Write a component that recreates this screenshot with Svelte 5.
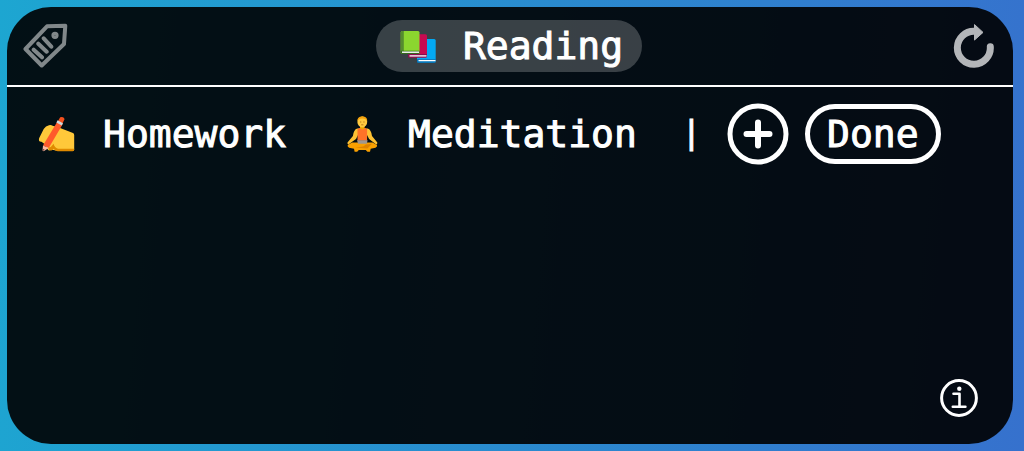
<script>
	let current = $state('Reading');
	let others = $state(['Homework', 'Meditation']);

	function pick(name) {
		others = others.map((o) => (o === name ? current : o));
		current = name;
	}
</script>

{#snippet emoji(name)}
	<svg class="emoji" viewBox="0 0 38 38" aria-hidden="true">
		{#if name === 'Reading'}
			<rect x="19" y="12" width="18.7" height="23.6" rx="1.5" fill="#03a9f4" />
			<path d="M19 32h18.7v2.4q0 1.4-1.4 1.4H20.4q-1.4 0-1.4-1.4z" fill="#0277bd" />
			<path d="M20.5 33.6h17" stroke="#fff" stroke-width="1.3" />
			<rect x="10" y="7.3" width="19" height="23.2" rx="1.5" fill="#c70a50" />
			<path d="M10 27h19v2.2q0 1.4-1.4 1.4H11.4q-1.4 0-1.4-1.4z" fill="#880e4f" />
			<path d="M11.5 28.9h17" stroke="#fff" stroke-width="1.3" />
			<rect x="2.7" y="4" width="18.8" height="23" rx="1.5" fill="#8bd62f" />
			<path d="M4.2 4h1.6v20.5H2.7v-19q0-1.5 1.5-1.5z" fill="#558b2f" />
			<path d="M2.7 23.8h18.8v1.6q0 1.5-1.5 1.5H4.2q-1.5 0-1.5-1.5z" fill="#33691e" />
			<path d="M4 25.2h17" stroke="#fff" stroke-width="1.4" />
		{:else if name === 'Homework'}
			<path
				d="M11 10.3q1.8-.6 3.6.4l6.2 1.7L35 18q1.2.6 1.2 2v14.5q0 1.5-1.5 1.5H20.5L13 34.5q-2 1.8-3.2 0L6.5 29l-3-2.2q-3.3.2-2.4-3.5L5.7 14q2-3.2 5.3-3.7z"
				fill="#ffc83a"
			/>
			<path
				d="M10 32.5q2.8.4 4.5-2.5l1-1.2q1 3.8 4.5 5h16.2v1q0 1.4-1.5 1.4h-15q-2.7-.3-4-2.4l-2.2 1.6q-2.5 1-3.5-2.9z"
				fill="#e08a00"
			/>
			<path d="M19.4 6.6l5.1 2.8L10.7 33l-5.7-2.6z" fill="#ff5a2b" />
			<path d="M19.8 6.6l2.4-4.3q3.2-1.2 4.4 1.6l-2.2 4.8z" fill="#f4511e" />
			<path d="M19.6 5.3l5.4 2.9-1.2 2.3-5.4-2.9z" fill="#cfd8dc" />
			<path d="M5 30.4l5.7 2.6-5 3.2-1.2-.7z" fill="#ffb8a0" />
			<path d="M4.9 33.8l1.9 1.3-2.3 1z" fill="#5d3a35" />
		{:else}
			<path
				d="M9 27.5h20.6l4.4 2.6q.6 1.6-1.5 2.6l-4.8 1-.7 3h-2.6l-1.6-1.8h-7l-1.6 1.8h-2.6l-.6-3-4.9-1q-2-1-1.4-2.6z"
				fill="#f9a000"
			/>
			<path d="M23 29.4l6-.6-4.6 4.8-12.2-1 8-1.2z" fill="#df8300" />
			<path
				d="M14.2 13.5q-3.5 1-4.3 7.5l-5.4 6.5q-.3 1.5.8 2l7.7-5.5 2.5-5h8l2.6 5 7.2 5.5q1.3-.5 1-2L29 21q-.8-6.5-4.3-7.5z"
				fill="#ffc233"
			/>
			<path d="M17 10h4.6v4l-2.3 2.5-2.3-2.5z" fill="#eda600" />
			<path d="M14.5 14.3q1.2-1.3 2.5-1.3 2.3 3 4.6 0 1.3 0 2.5 1.3v11.4h-9.6z" fill="#ff7328" />
			<path d="M14 25.3h10.6l-.8 3.4h-8.7z" fill="#a0978f" />
			<ellipse cx="19.3" cy="6.9" rx="4.9" ry="5.5" fill="#ffca40" />
			<path d="M14.4 6.5q-.4-5 4.9-5.3 5.3.3 4.9 5.3-1-3-4.9-3t-4.9 3z" fill="#f5a20b" />
			<path d="M17 7h1.3M20.3 7h1.3M18.2 9.8h2.2" stroke="#a86b12" stroke-width=".8" />
		{/if}
	</svg>
{/snippet}

<main>
	<header>
		<button class="icon tags" aria-label="Tags">
			<svg width="48" height="48" viewBox="0 0 48 48">
				<path
					d="M3.5 27L25 4.3l18.3-.6L42 22 19.7 43.5zM11.7 27.7l8.3 7.6M16.3 21.7l8.4 8M21.7 16.3l7.6 8.4"
				/>
				<circle cx="33" cy="13.3" r="1.6" />
			</svg>
		</button>
		<button class="chip current">{@render emoji(current)}{current}</button>
		<button class="icon reset" aria-label="Reset">
			<svg width="44" height="48" viewBox="0 0 44 48">
				<path class="arc" d="M38.3 24.7A16.5 16.5 0 1 1 22.7 9.3" />
				<path class="head" d="M22.8 2.8l8.2 7.6-8.2 7.4z" />
			</svg>
		</button>
	</header>

	<div class="list">
		{#each others as name}
			<button class="chip" onclick={() => pick(name)}>{@render emoji(name)}{name}</button>
		{/each}
		<span class="separator">|</span>
		<button class="icon add" aria-label="Add">
			<svg width="62" height="62" viewBox="0 0 62 62">
				<circle cx="31" cy="31" r="28" />
				<path d="M31 19.5v23M19.5 31h23" />
			</svg>
		</button>
		<button class="done">Done</button>
	</div>

	<button class="icon info" aria-label="Info">
		<svg width="38" height="38" viewBox="0 0 38 38">
			<circle cx="19" cy="19" r="17.4" />
			<path d="M13.5 14.8h6v13M12.8 27.8h12.6" />
			<circle class="dot" cx="19.3" cy="9.8" r="2.2" />
		</svg>
	</button>
</main>

<style>
	:global(body) {
		background: linear-gradient(95deg, #1da6d1, #3671cd);
	}

	:global(#app) {
		display: flex;
		min-height: 100vh;
	}

	main {
		flex: 1;
		display: flex;
		flex-direction: column;
		margin: 7px 11px 7px 7px;
		border-radius: 44px;
		background: rgba(0, 0, 0, 0.9);
		color: white;
		font-family: 'DejaVu Sans Mono', monospace;
		font-size: 38px;
		-webkit-text-stroke: 1px white;
	}

	button {
		padding: 0;
		border: none;
		background: none;
		color: inherit;
		font: inherit;
		cursor: pointer;
	}

	svg {
		display: block;
		flex: none;
	}

	header {
		display: grid;
		grid-template-columns: 1fr auto 1fr;
		align-items: center;
		padding: 13px 17px 13px 15px;
		border-bottom: 2px solid white;
	}

	.chip {
		display: flex;
		align-items: center;
		gap: 27px;
		height: 52px;
		padding: 0 19px 0 22px;
		border-radius: 26px;
		line-height: 52px;
	}

	.current {
		background: rgba(255, 255, 255, 0.21);
	}

	.emoji {
		width: 38px;
		height: 38px;
	}

	.icon svg {
		fill: none;
		stroke: white;
		stroke-linecap: round;
		stroke-linejoin: round;
	}

	.tags {
		justify-self: start;
		opacity: 0.5;
	}

	.tags svg {
		stroke-width: 4px;
	}

	.reset {
		justify-self: end;
		opacity: 0.7;
	}

	.arc {
		stroke-width: 7px;
	}

	.head {
		fill: white;
		stroke-width: 1px;
	}

	.list {
		display: flex;
		flex-wrap: wrap;
		align-items: center;
		gap: 16px;
		padding: 16px 9px;
	}

	.separator {
		margin: 0 10px;
		padding-bottom: 4px;
		font-size: 32px;
		line-height: 48px;
	}

	.add svg {
		stroke-width: 5px;
	}

	.add path {
		stroke-width: 6px;
	}

	.done {
		height: 60px;
		padding: 0 17px;
		border: 5px solid white;
		border-radius: 30px;
		line-height: 48px;
	}

	.info {
		align-self: flex-end;
		margin: auto 35px 27px 0;
	}

	.info svg {
		stroke-width: 3px;
	}

	.info path {
		stroke-width: 2.6px;
	}

	.info .dot {
		fill: white;
		stroke: none;
	}
</style>
